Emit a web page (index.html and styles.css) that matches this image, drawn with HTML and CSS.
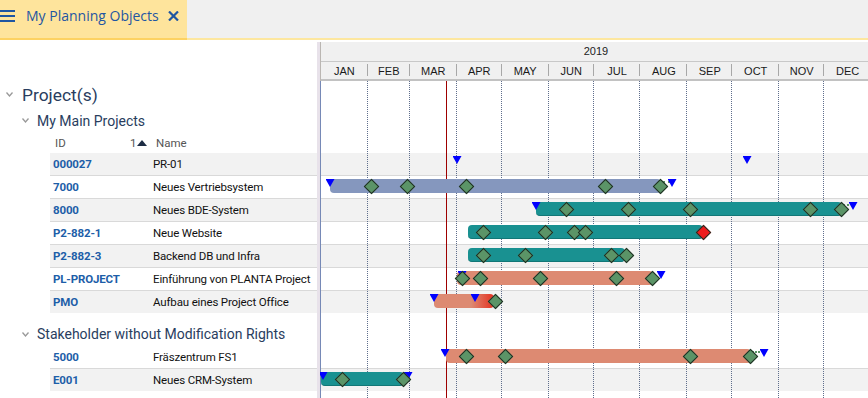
FILE: index.html
```html
<!DOCTYPE html>
<html lang="de">
<head>
    <meta charset="UTF-8">
    <title>My Planning Objects</title>
    <link rel="stylesheet" href="styles.css">
</head>
<body>
    <div class="topbar">
        <div class="tab">
            <svg class="menu" width="15" height="14" viewBox="0 0 15 14"><rect x="0" y="1" width="15" height="2"/><rect x="0" y="6" width="15" height="2"/><rect x="0" y="11" width="15" height="2"/></svg>
            <span class="tab-title">My Planning Objects</span>
            <svg class="close" width="11" height="10" viewBox="0 0 11 10"><path d="M1 0.5 L10 9.5 M10 0.5 L1 9.5"/></svg>
        </div>
    </div>

    <div class="main">
        <!-- Baum links -->
        <div class="tree">
            <div class="tree-top"></div>
            <div class="group level-1"><svg class="chev" width="7" height="5" viewBox="0 0 7 5"><path d="M0.5 0.5 L3.5 4 L6.5 0.5"/></svg>Project(s)</div>
            <div class="group level-2"><svg class="chev" width="7" height="5" viewBox="0 0 7 5"><path d="M0.5 0.5 L3.5 4 L6.5 0.5"/></svg>My Main Projects</div>
            <div class="cols"><span class="c-id">ID</span><span class="c-sort">1<svg width="10" height="6" viewBox="0 0 10 6"><path d="M0 6 L5 0 L10 6 Z"/></svg></span><span class="c-name">Name</span></div>
            <div class="rows">
                <div class="row alt"><span class="id">000027</span><span class="name">PR-01</span></div>
                <div class="row"><span class="id">7000</span><span class="name">Neues Vertriebsystem</span></div>
                <div class="row alt"><span class="id">8000</span><span class="name">Neues BDE-System</span></div>
                <div class="row"><span class="id">P2-882-1</span><span class="name">Neue Website</span></div>
                <div class="row alt"><span class="id">P2-882-3</span><span class="name">Backend DB und Infra</span></div>
                <div class="row"><span class="id">PL-PROJECT</span><span class="name">Einführung von PLANTA Project</span></div>
                <div class="row alt"><span class="id">PMO</span><span class="name">Aufbau eines Project Office</span></div>
            </div>
            <div class="group level-2 stake"><svg class="chev" width="7" height="5" viewBox="0 0 7 5"><path d="M0.5 0.5 L3.5 4 L6.5 0.5"/></svg>Stakeholder without Modification Rights</div>
            <div class="rows">
                <div class="row"><span class="id">5000</span><span class="name">Fräszentrum FS1</span></div>
                <div class="row alt"><span class="id">E001</span><span class="name">Neues CRM-System</span></div>
            </div>
        </div>

        <div class="splitter"></div>

        <!-- Gantt -->
        <div class="gantt">
            <div class="timescale">
                <div class="year">2019</div>
                <div class="months">
                    <div>JAN</div><div>FEB</div><div>MAR</div><div>APR</div><div>MAY</div><div>JUN</div>
                    <div>JUL</div><div>AUG</div><div>SEP</div><div>OCT</div><div>NOV</div><div>DEC</div>
                </div>
            </div>
            <div class="chart">
                <div class="gridlines">
                    <div></div><div></div><div></div><div></div><div></div><div></div>
                    <div></div><div></div><div></div><div></div><div></div><div></div>
                </div>
                <div class="today"></div>

                <div class="spacer sp-1"></div>
                <div class="spacer sp-2"></div>
                <div class="spacer sp-3"></div>
                <div class="lanes">
                    <div class="lane alt">
                        <i class="tri" style="--x:136"></i>
                        <i class="tri" style="--x:426"></i>
                    </div>
                    <div class="lane">
                        <b class="bar slate" style="--x:9; --w:331"></b>
                        <s class="link" style="--x:342; --w:7"></s>
                        <i class="tri" style="--x:9"></i>
                        <i class="tri" style="--x:351"></i>
                        <u class="dia" style="--x:50"></u>
                        <u class="dia" style="--x:86"></u>
                        <u class="dia" style="--x:145"></u>
                        <u class="dia" style="--x:284"></u>
                        <u class="dia" style="--x:339"></u>
                    </div>
                    <div class="lane alt">
                        <b class="bar teal" style="--x:215; --w:306"></b>
                        <s class="link" style="--x:522; --w:6"></s>
                        <i class="tri" style="--x:215"></i>
                        <i class="tri" style="--x:532"></i>
                        <u class="dia" style="--x:245"></u>
                        <u class="dia" style="--x:307"></u>
                        <u class="dia" style="--x:369"></u>
                        <u class="dia" style="--x:489"></u>
                        <u class="dia" style="--x:520"></u>
                    </div>
                    <div class="lane">
                        <b class="bar teal" style="--x:147; --w:235"></b>
                        <u class="dia" style="--x:162"></u>
                        <u class="dia" style="--x:224"></u>
                        <u class="dia" style="--x:253"></u>
                        <u class="dia" style="--x:264"></u>
                        <u class="dia late" style="--x:382"></u>
                    </div>
                    <div class="lane alt">
                        <b class="bar teal" style="--x:147; --w:157"></b>
                        <u class="dia" style="--x:162"></u>
                        <u class="dia" style="--x:204"></u>
                        <u class="dia" style="--x:290"></u>
                        <u class="dia" style="--x:305"></u>
                    </div>
                    <div class="lane">
                        <b class="bar salmon" style="--x:136; --w:196"></b>
                        <i class="tri" style="--x:141"></i>
                        <i class="tri" style="--x:340"></i>
                        <u class="dia" style="--x:141"></u>
                        <u class="dia" style="--x:159"></u>
                        <u class="dia" style="--x:219"></u>
                        <u class="dia" style="--x:295"></u>
                        <u class="dia" style="--x:331"></u>
                    </div>
                    <div class="lane alt">
                        <b class="bar salmon overdue" style="--x:113; --w:60"></b>
                        <i class="tri" style="--x:113"></i>
                        <i class="tri" style="--x:154"></i>
                        <u class="dia" style="--x:174"></u>
                    </div>
                </div>

                <div class="spacer sp-4"></div>
                <div class="lanes">
                    <div class="lane">
                        <b class="bar salmon" style="--x:125; --w:305"></b>
                        <s class="link" style="--x:431; --w:8"></s>
                        <i class="tri" style="--x:124"></i>
                        <i class="tri" style="--x:443"></i>
                        <u class="dia" style="--x:145"></u>
                        <u class="dia" style="--x:184"></u>
                        <u class="dia" style="--x:369"></u>
                        <u class="dia" style="--x:429"></u>
                    </div>
                    <div class="lane alt">
                        <b class="bar teal" style="--x:0; --w:83"></b>
                        <i class="tri" style="--x:2"></i>
                        <i class="tri" style="--x:87"></i>
                        <u class="dia" style="--x:21"></u>
                        <u class="dia" style="--x:82"></u>
                    </div>
                </div>
            </div>
        </div>
    </div>
</body>
</html>
```

FILE: styles.css
```css
* {
    box-sizing: border-box;
}
html, body {
    margin: 0;
    height: 398px;
    overflow: hidden;
}
body {
    font-family: Roboto, "Liberation Sans", sans-serif;
    background-color: #fff;
    color: #222;
}

/* Reiter oben */
.topbar {
    height: 40px;
    background-color: #f0f0f0;
    border-bottom: 2px solid #fde79f;
    display: flex;
}
.tab {
    width: 187px;
    height: 40px;
    background-color: #fee49c;
    border-bottom: 2px solid #fdd262;
    display: flex;
    align-items: center;
    padding-bottom: 7px;
    color: #1f56a2;
}
.tab .menu {
    fill: #1f56a2;
    flex: none;
}
.tab-title {
    font-family: "Open Sans", "Liberation Sans", sans-serif;
    font-size: 14px;
    margin-left: 11px;
    width: 142px;
    white-space: nowrap;
}
.tab .close {
    stroke: #1f56a2;
    stroke-width: 2.2;
    fill: none;
}

.main {
    display: flex;
    height: 358px;
}

/* Baum */
.tree {
    width: 317px;
    flex: none;
}
.tree-top {
    height: 41px;
}
.group {
    display: flex;
    align-items: center;
    color: #293d5e;
    white-space: nowrap;
}
.chev {
    fill: none;
    stroke: #999;
    stroke-width: 1.3;
    flex: none;
}
.level-1 {
    height: 27px;
    padding-left: 6px;
    font-size: 17.4px;
}
.level-1 .chev {
    margin-right: 9px;
}
.level-2 {
    height: 24px;
    padding-left: 22px;
    font-size: 14px;
    padding-top: 1px;
}
.level-2 .chev {
    margin-right: 8px;
}
.level-2.stake {
    height: 33px;
    padding-top: 9px;
}
.cols {
    height: 21px;
    display: flex;
    align-items: center;
    font-size: 11.5px;
    color: #555;
    padding-left: 55px;
}
.c-id {
    width: 75px;
}
.c-sort {
    width: 26px;
    display: flex;
    align-items: center;
    gap: 1px;
}
.c-sort svg {
    fill: #1d2c44;
}
.rows {
    margin-left: 50px;
}
.row {
    height: 22px;
    display: flex;
    align-items: center;
    font-size: 11.5px;
    letter-spacing: -0.15px;
    white-space: nowrap;
}
.row + .row {
    height: 23px;
    border-top: 1px solid #d9d9d9;
}
.row.alt {
    background-color: #f2f2f2;
}
.row .id {
    width: 103px;
    flex: none;
    padding-left: 3px;
    font-weight: bold;
    color: #1d5ea8;
}
.row .name {
    color: #111;
}

.splitter {
    width: 3px;
    flex: none;
    margin-top: 2px;
    background-color: #e8e2ea;
}

/* Gantt */
.gantt {
    flex: 1;
    margin-top: 2px;
    overflow: hidden;
    font-family: "Liberation Sans", Arial, sans-serif;
}
.timescale {
    background-color: #f0f0f0;
    border-left: 1px solid #bab6b2;
}
.year {
    width: 550px;
    height: 20px;
    line-height: 19px;
    border-bottom: 1px solid #c8c8c8;
    text-align: center;
    font-size: 11px;
    color: #222;
}
.months,
.gridlines {
    display: grid;
    grid-template-columns: 31fr 28fr 31fr 30fr 31fr 30fr 31fr 31fr 30fr 31fr 30fr 31fr;
    width: 550px;
}
.months {
    height: 19px;
    border-bottom: 2px solid #c2c2c2;
    font-size: 11px;
    color: #1a1a1a;
}
.months div {
    position: relative;
    display: flex;
    align-items: center;
    justify-content: center;
}
.months div + div::before {
    content: "";
    position: absolute;
    left: -1px;
    top: 2px;
    bottom: 3px;
    width: 1px;
    background-color: #a8a8a8;
}
.chart {
    position: relative;
    height: 317px;
    border-left: 1px solid #7689b6;
}
.gridlines {
    position: absolute;
    top: 0;
    bottom: 0;
    left: 0;
    z-index: 1;
}
.gridlines div {
    border-right: 1px dotted #5f6e8c;
}
.today {
    position: absolute;
    top: 0;
    bottom: 0;
    left: 125px;
    width: 1px;
    background-color: #9e0000;
    z-index: 2;
}
.sp-1 { height: 27px; }
.sp-2 { height: 24px; }
.sp-3 { height: 21px; }
.sp-4 { height: 33px; }

.lane {
    position: relative;
    height: 22px;
}
.lane + .lane {
    height: 23px;
    border-top: 1px solid #d9d9d9;
}
.lane.alt {
    background-color: #f2f2f2;
}
.lane > * {
    position: absolute;
    z-index: 3;
    text-decoration: none;
}
.bar {
    top: 3px;
    height: 14px;
    left: calc(var(--x) * 1px);
    width: calc(var(--w) * 1px);
    border-radius: 4px;
}
.bar.slate {
    background-color: #8597be;
}
.bar.teal {
    background-color: #199191;
    border-bottom: 1px solid #127777;
}
.bar.salmon {
    background-color: #dd8a72;
}
.bar.overdue {
    background: linear-gradient(to right, #dd8a72 0%, #dd8a72 62%, #e43c2b 95%);
}
.link {
    top: 5px;
    height: 2px;
    left: calc(var(--x) * 1px);
    width: calc(var(--w) * 1px);
    border-top: 2px dotted #5b9467;
}
.tri {
    top: 3px;
    left: calc(var(--x) * 1px - 4.5px);
    width: 9px;
    height: 8px;
    background-color: #0000ff;
    clip-path: polygon(0 0, 100% 0, 50% 100%);
}
.dia {
    top: 4.5px;
    left: calc(var(--x) * 1px - 5.5px);
    width: 11px;
    height: 11px;
    background-color: #5b9467;
    border: 1px solid #1f2e22;
    transform: rotate(45deg);
}
.dia.late {
    background-color: #ee1c1c;
}
```
